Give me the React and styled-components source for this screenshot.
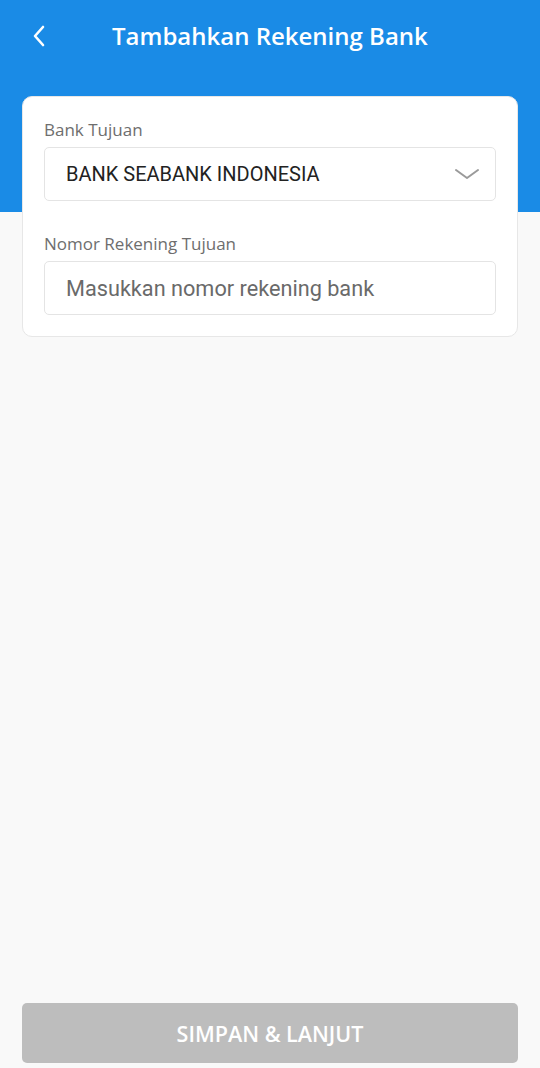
import React from "react";
import styled, { createGlobalStyle } from "styled-components";

const Global = createGlobalStyle`
  html, body { margin: 0; padding: 0; }
  body { font-family: "Open Sans", "Noto Sans", sans-serif; background: #f9f9f9; }
  * { box-sizing: border-box; }
`;

const Page = styled.div`
  width: 540px;
  height: 1068px;
  display: flex;
  flex-direction: column;
  background: linear-gradient(#1a8be6 0, #1a8be6 212px, #f9f9f9 212px);
`;

const TopBar = styled.header`
  height: 72px;
  display: flex;
  align-items: center;
  padding: 0 0 0 26px;
  color: #fff;
`;

const BackButton = styled.button`
  width: 26px;
  height: 30px;
  border: 0;
  padding: 0;
  background: transparent;
  display: flex;
  align-items: center;
  justify-content: center;
  cursor: pointer;
`;

const Title = styled.h1`
  margin: 0 0 0 60px;
  font-family: "Open Sans", sans-serif;
  font-weight: 600;
  font-size: 24px;
  line-height: 34px;
  color: #fff;
`;

const Card = styled.section`
  margin: 24px 22px 0;
  background: #fff;
  border-radius: 10px;
  border: 1px solid #e7e7e7;
  padding: 22px 21px 21px;
  display: flex;
  flex-direction: column;
  gap: 32px;
`;

const Field = styled.div`
  display: flex;
  flex-direction: column;
  gap: 6px;
`;

const Label = styled.label`
  font-family: "Open Sans", sans-serif;
  font-size: 17px;
  color: #6e6e6e;
  line-height: 22px;
`;

const Box = styled.div`
  height: 54px;
  border: 1px solid #e4e4e4;
  border-radius: 5px;
  display: flex;
  align-items: center;
  justify-content: space-between;
  padding: 0 15px 0 21px;
  font-family: Roboto, sans-serif;
  font-size: ${(p) => (p.$placeholder ? "21.7px" : "20px")};
  color: ${(p) => (p.$placeholder ? "#6a6a6a" : "#222")};
`;

const Spacer = styled.div`
  flex: 1;
`;

const SubmitButton = styled.button`
  margin: 0 22px 5px;
  height: 60px;
  border: 0;
  border-radius: 5px;
  background: #bdbdbd;
  color: #fff;
  font-family: "Open Sans", sans-serif;
  font-weight: 600;
  font-size: 21.5px;
`;

export default function App() {
  return (
    <>
      <Global />
      <Page>
        <TopBar>
          <BackButton aria-label="Kembali">
            <svg width="14" height="22" viewBox="0 0 14 22" fill="none">
              <path d="M11 2 L3 11 L11 20" stroke="#fff" strokeWidth="2.6" strokeLinecap="round" strokeLinejoin="round" />
            </svg>
          </BackButton>
          <Title>Tambahkan Rekening Bank</Title>
        </TopBar>
        <Card>
          <Field>
            <Label>Bank Tujuan</Label>
            <Box>
              <span>BANK SEABANK INDONESIA</span>
              <svg width="26" height="12" viewBox="0 0 26 12" fill="none">
                <path d="M2 2 L13 10 L24 2" stroke="#9a9a9a" strokeWidth="2" strokeLinecap="round" strokeLinejoin="round" />
              </svg>
            </Box>
          </Field>
          <Field>
            <Label>Nomor Rekening Tujuan</Label>
            <Box $placeholder>
              <span>Masukkan nomor rekening bank</span>
            </Box>
          </Field>
        </Card>
        <Spacer />
        <SubmitButton>SIMPAN &amp; LANJUT</SubmitButton>
      </Page>
    </>
  );
}
